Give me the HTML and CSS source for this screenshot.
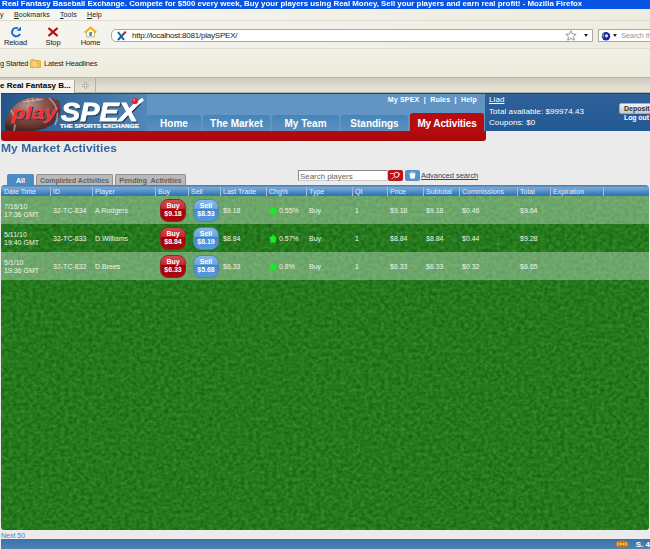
FILE: index.html
```
<!DOCTYPE html>
<html lang="en">
<head>
<meta charset="utf-8">
<title>playSPEX</title>
<link rel="stylesheet" href="styles.css">
</head>
<body>
<div class="titlebar"><span>Real Fantasy Baseball Exchange. Compete for $500 every week, Buy your players using Real Money, Sell your players and earn real profit! - Mozilla Firefox</span></div>
<div class="menubar"><span class="m1">y</span><span class="m2"><u>B</u>ookmarks</span><span class="m3"><u>T</u>ools</span><span><u>H</u>elp</span></div>
<div class="toolbar">
  <div class="tool reload"><svg width="12" height="12" viewBox="0 0 12 12"><path d="M10 8A4.2 4.2 0 1 1 8 2.3" fill="none" stroke="#1769cf" stroke-width="2"/><path d="M6.5 4.8H11V.4Z" fill="#1769cf"/></svg><span>Reload</span></div>
  <div class="tool stop"><svg width="12" height="12" viewBox="0 0 12 12"><path d="M1.5 2L10.5 10M10.5 2L1.5 10" stroke="#b3090b" stroke-width="2.2"/></svg><span>Stop</span></div>
  <div class="tool home"><svg width="13" height="12" viewBox="0 0 13 12"><path d="M2.5 5.5V11H10.5V5.5L6.5 2Z" fill="#fffbe8" stroke="#bfa878" stroke-width=".8"/><path d="M.8 6.5L6.5 1.5L12.2 6.5" fill="none" stroke="#f2ac16" stroke-width="2"/><path d="M5.3 6h2.6v4H5.3z" fill="#5088bc"/></svg><span>Home</span></div>
  <div class="address">
    <svg width="11" height="10" viewBox="0 0 11 10"><path d="M2 1L8 9M8.5 2L2 9" stroke="#17629b" stroke-width="2"/><circle cx="9" cy="1.5" r="1.2" fill="#d22"/></svg>
    <span>http://localhost:8081/playSPEX/</span>
    <svg class="star" width="12" height="11" viewBox="0 0 12 11"><path d="M6 .8L7.5 4L11.2 4.3L8.5 6.7L9.3 10.2L6 8.4L2.7 10.2L3.5 6.7L.8 4.3L4.5 4Z" fill="#fff" stroke="#8a8a8a" stroke-width=".9"/></svg>
    <i class="caret"></i>
  </div>
  <div class="search"><svg width="10" height="10" viewBox="0 0 10 10"><circle cx="5" cy="5.2" r="4.2" fill="#1c29a6"/><path d="M1 5A4 4 0 0 1 3 1.5V7Z" fill="#4cae3b"/><circle cx="5.5" cy="4.8" r="1.6" fill="#dbe5ff"/></svg><i class="caret"></i><span>Search th</span></div>
</div>
<div class="bookmarks"><span class="b1">g Started</span><svg width="11" height="9" viewBox="0 0 11 9"><path d="M.5 1.5Q.5 .5 1.5 .5H4L5 1.5H9.5Q10.5 1.5 10.5 2.5V8.5H.5Z" fill="#f5bf50" stroke="#dca02a" stroke-width=".7"/><path d="M2.5 3.2Q6 3.2 6.3 7.5M2.5 5Q4.3 5.2 4.5 7.5" fill="none" stroke="#fff3c4" stroke-width=".9"/></svg><span class="b2">Latest Headlines</span></div>
<div class="tabs"><div class="tab"><span>e Real Fantasy B...</span></div><div class="newtab"><svg width="7" height="7" viewBox="0 0 7 7"><path d="M3.5 .5V6.5M.5 3.5H6.5" stroke="#999889" stroke-width="2"/><path d="M3.5 1V6M1 3.5H6" stroke="#eceadd" stroke-width=".8"/></svg></div></div>
<div class="site">
  <header class="header">
    <div class="brandnav">
      <svg class="logo" width="146" height="37" viewBox="0 0 146 37">
        <defs>
          <radialGradient id="ball" cx=".42" cy=".25" r=".72"><stop offset="0" stop-color="#b39894"/><stop offset=".4" stop-color="#8b5850"/><stop offset=".8" stop-color="#69362f"/><stop offset="1" stop-color="#452527"/></radialGradient>
          <linearGradient id="logobg" x2="1"><stop stop-color="#245588"/><stop offset="1" stop-color="#5187b9"/></linearGradient>
        </defs>
        <path d="M0 0H146V38H0Z" fill="url(#logobg)"/>
        <path d="M4 32C6 13 21 2 39 3Q53 3 58 7C65 25 49 37 23 38H10Q3 38 4 32Z" fill="url(#ball)"/>
        <path d="M10 16Q16 25 13 37M48 4Q61 15 54 31" fill="none" stroke="#dbd2d0" stroke-width="1.6" opacity=".6"/>
        <path d="M22 8L42 5M26 5L28 9M31 4L33 8M36 4L38 7" stroke="#d6c8c5" stroke-width="1" opacity=".8"/>
        <g class="wordmark">
          <text x="11" y="25" font-size="18" fill="#f72c32" stroke="#ff686b" stroke-width=".3" textLength="45" lengthAdjust="spacingAndGlyphs">play</text>
          <text x="60" y="26.500" font-size="26" fill="#fff" stroke="#fff" stroke-width=".8" textLength="77" lengthAdjust="spacingAndGlyphs">SPEX</text>
        </g>
        <path d="M130 15L142 5" stroke="#fff" stroke-width="3"/>
        <circle cx="134" cy="7" r="3.1" fill="#eb2029"/><circle cx="133" cy="6" r="1" fill="#ff8585"/>
        <text class="tagline" x="59" y="34" font-size="5.6" fill="#fff" stroke="#fff" stroke-width=".2" textLength="79" lengthAdjust="spacingAndGlyphs">THE SPORTS EXCHANGE</text>
      </svg>
      <div class="navside">
        <div class="toplinks">My SPEX&nbsp; |&nbsp; Rules&nbsp; |&nbsp; Help</div>
        <nav><a class="n1">Home</a><a class="n2">The Market</a><a class="n3">My Team</a><a class="n4">Standings</a><a class="n5">My Activities</a></nav>
      </div>
    </div>
    <div class="account">
      <div class="who"><u>Liad</u><span>Total available: $99974.43</span><span>Coupons: $0</span></div>
      <div class="actions"><button>Deposit</button><span>Log out</span></div>
    </div>
  </header>
  <div class="redline"></div>
  <h1><span>My Market Activities</span></h1>
  <div class="controls">
    <div class="filters"><span class="f1">All</span><span class="f2">Completed Activities</span><span class="f3">Pending&nbsp; Activities</span></div>
    <div class="find"><div class="field">Search players</div>
      <svg class="go" width="15" height="11" viewBox="0 0 15 11"><rect width="15" height="11" rx="2" fill="#b71319"/><circle cx="8.5" cy="4.8" r="2.5" fill="none" stroke="#fff" stroke-width="1"/><path d="M7 6.5L3.5 9M2 3.5H6M10 7L12 3" stroke="#edb1b3" stroke-width="1"/></svg>
      <svg class="trash" width="15" height="11" viewBox="0 0 15 11"><rect width="15" height="11" rx="2" fill="#5592c7"/><path d="M5 4H10L9.4 8.2H5.6ZM4.3 3.3H10.7M6.3 2.2H8.7" fill="#fff" stroke="#fff" stroke-width=".7"/></svg>
      <u>Advanced search</u></div>
  </div>
  <main class="board">
    <svg class="grass" width="648" height="334">
      <defs><filter id="turf" x="0" y="0" width="100%" height="100%" color-interpolation-filters="sRGB"><feTurbulence type="fractalNoise" baseFrequency=".25 .28" numOctaves="3" seed="8"/><feColorMatrix values=".18 0 0 0 .055  .24 0 0 0 .355  .14 0 0 0 .045  0 0 0 0 1"/></filter></defs>
      <rect width="648" height="334" filter="url(#turf)"/>
    </svg>
    <div class="row head"><span>Date Time</span><span>ID</span><span>Player</span><span>Buy</span><span>Sell</span><span>Last Trade</span><span>Chg%</span><span>Type</span><span>Qt</span><span>Price</span><span>Subtotal</span><span>Commissions</span><span>Total</span><span>Expiration</span><span></span></div>
    <div class="row light"><span>7/16/10<br>17:36 GMT</span><span>32-TC-834</span><span>A.Rodgers</span><b class="buy">Buy<br>$9.18</b><b class="sell">Sell<br>$8.53</b><span>$9.18</span><span class="chg"><i></i>0.55%</span><span>Buy</span><span>1</span><span>$9.18</span><span>$9.18</span><span>$0.46</span><span>$9.64</span></div>
    <div class="row"><span>5/11/10<br>19:40 GMT</span><span>32-TC-833</span><span>D.Williams</span><b class="buy">Buy<br>$8.84</b><b class="sell">Sell<br>$8.19</b><span>$8.84</span><span class="chg"><i></i>0.57%</span><span>Buy</span><span>1</span><span>$8.84</span><span>$8.84</span><span>$0.44</span><span>$9.28</span></div>
    <div class="row light"><span>5/1/10<br>19:36 GMT</span><span>32-TC-832</span><span>D.Brees</span><b class="buy">Buy<br>$6.33</b><b class="sell">Sell<br>$5.68</b><span>$6.33</span><span class="chg"><i></i>0.8%</span><span>Buy</span><span>1</span><span>$6.33</span><span>$6.33</span><span>$0.32</span><span>$6.65</span></div>
  </main>
  <div class="next">Next 50</div>
  <footer><svg width="14" height="8" viewBox="0 0 14 8"><ellipse cx="7" cy="4" rx="6.8" ry="3.6" fill="#c77a12"/><path d="M4 4H10M2.8 2V6M11.2 2V6M5.5 3V5M8.5 3V5" stroke="#f4d9a0" stroke-width=".8"/></svg><b>S. 4</b></footer>
</div>
</body>
</html>
```
FILE: styles.css
```
* { box-sizing: border-box; }
body { margin: 0; width: 650px; height: 549px; overflow: hidden; background: #ebebec; font: 7px "Liberation Sans", Arial, sans-serif; white-space: nowrap; }
svg { display: block; flex: none; }

/* Browser window */
.titlebar { height: 9px; overflow: hidden; background: #0754e5; color: #fff; font-size: 8px; font-weight: bold; line-height: 8px; padding-left: 2px; }
.titlebar span { display: inline-block; transform: scaleX(.986); transform-origin: left; }
.menubar { height: 11px; display: flex; background: linear-gradient(90deg, #f6f5f0, #eeecdf); font-size: 7px; line-height: 12px; letter-spacing: .1px; color: #222; }
.m1 { width: 14px; }
.m2 { width: 46px; }
.m3 { width: 27px; }
.toolbar { height: 29px; display: flex; border-top: 1px solid #dddccf; border-bottom: 1px solid #deddd0; background: linear-gradient(90deg, #f5f4ef, #efeddf); color: #222; }
.tool { display: flex; flex: none; flex-direction: column; align-items: center; padding-top: 5px; font-size: 7.5px; line-height: 8px; gap: 1px; letter-spacing: -.15px; }
.reload { width: 31px; }
.stop { width: 44px; }
.home { width: 31px; }
.address { width: 482px; height: 13px; margin: 8px 0 0 5px; display: flex; flex: none; align-items: center; border: 1px solid #aaa99f; border-radius: 5px 0 0 5px; background: #fff; padding-left: 4px; gap: 5px; font-size: 8px; letter-spacing: -.22px; }
.star { margin-left: auto; }
.caret { border: 2px solid transparent; border-top: 3px solid #222; border-bottom: 0; margin: 0 4px 0 2px; flex: none; }
.search { width: 60px; height: 13px; margin: 8px 0 0 5px; display: flex; align-items: center; border: 1px solid #aaa99f; background: #fff; padding-left: 2px; overflow: hidden; font-size: 7.5px; letter-spacing: -.15px; color: #999; flex: none; }
.bookmarks { height: 28px; display: flex; align-items: center; background: linear-gradient(180deg, #f1f0e7, #edebdc); color: #222; font-size: 7.5px; letter-spacing: -.25px; }
.b1 { width: 30px; }
.b2 { margin-left: 3px; letter-spacing: -.15px; }
.tabs { height: 16px; display: flex; border-top: 1px solid #b8b6a6; border-bottom: 1px solid #b9b7aa; background: linear-gradient(#cccabc, #e3e1d4 70%); }
.tab { width: 75px; height: 13px; margin-top: 2px; background: #f4f3ed; border-right: 1px solid #aeac9c; font-size: 8px; font-weight: bold; line-height: 11px; }
.newtab { width: 21px; padding: 4px 7px; border-right: 1px solid #b3b1a5; }

/* Site header */
.site { margin-left: 1px; height: 456px; display: flex; flex-direction: column; }
.header { height: 38px; padding-top: 1px; background: #0f4777; display: flex; flex: none; }
.brandnav { width: 484px; display: flex; background: #6295c3; }
.wordmark { font: italic bold 18px "Liberation Sans", sans-serif; filter: drop-shadow(1px 1px 0 #223650); }
.tagline { font-family: "Liberation Sans", sans-serif; font-weight: bold; }
.navside { flex: 1; }
.toplinks { height: 21px; text-align: right; color: #fff; font-weight: bold; font-size: 7px; line-height: 11px; padding-right: 8px; letter-spacing: .2px; }
nav { display: flex; gap: 2px; align-items: flex-end; }
nav a { height: 16px; background: linear-gradient(#4585ba, #5b90bf); border-radius: 3px 3px 0 0; color: #fff; font-weight: bold; font-size: 10px; line-height: 18px; text-align: center; }
.n1 { width: 54px; } .n2 { width: 67px; } .n3 { width: 67px; } .n4 { width: 67px; }
nav .n5 { width: 74px; height: 18px; line-height: 22px; background: #b60c0f; margin-top: -2px; letter-spacing: -.12px; }
.account { flex: 1; display: flex; justify-content: space-between; background: linear-gradient(#2f6099, #245a94); color: #fff; padding-left: 4px; overflow: hidden; }
.who { display: flex; flex-direction: column; font-size: 8px; line-height: 11px; letter-spacing: .08px; }
.who u { line-height: 12px; }
.actions { width: 31px; padding-top: 9px; font-size: 7px; font-weight: bold; flex: none; }
.actions button { display: block; width: 44px; height: 11px; padding: 0 0 0 4px; border: 1px solid #aaa; border-radius: 2px; background: linear-gradient(#f3f3f3, #c8c8c8); color: #333; font: bold 7px/9px "Liberation Sans"; text-align: left; }
.actions span { display: block; margin: 0 0 0 5px; letter-spacing: -.1px; }
.redline { width: 485px; height: 10px; background: linear-gradient(#b70b0e, #a50709); border-radius: 0 0 3px 3px; flex: none; }
h1 { height: 33px; margin: 0; color: #32669c; font-size: 11px; line-height: 14px; flex: none; }
h1 span { display: inline-block; transform-origin: left; transform: scaleX(1.1); }
.controls { height: 11px; display: flex; flex: none; }
.filters { width: 297px; display: flex; gap: 2px; padding-left: 6px; font-weight: bold; }
.filters span { height: 11px; background: #b9b9b9; border: 1px solid #909090; border-bottom: 0; border-radius: 2px 2px 0 0; text-align: center; color: #626262; line-height: 11px; }
.filters .f1 { width: 27px; background: #4b8cc4; border-color: #4b8cc4; color: #fff; }
.f2 { width: 77px; } .f3 { width: 71px; }
.find { display: flex; align-items: center; margin-top: -4px; height: 11px; color: #254675; font-size: 7.5px; letter-spacing: -.05px; }
.field { width: 90px; height: 11px; border: 1px solid #888; border-right-color: #ccc; border-bottom-color: #ccc; background: #fff; color: #666; padding-left: 1px; font-size: 8px; line-height: 11px; }
.trash { margin: 0 1px 0 2px; }

/* Activity table */
.board { position: relative; isolation: isolate; width: 648px; height: 345px; border-radius: 3px; overflow: hidden; flex: none; }
.grass { position: absolute; z-index: -1; left: 0; top: 11px; }
.row { height: 28px; padding-top: 1px; display: grid; grid-template-columns: 50px 42px 63px 33px 32px 46px 40px 46px 35px 36px 36px 58px 33px 53px 45px; align-items: center; color: #edf5e8; line-height: 8px; }
.row > span { padding-left: 2px; }
.row > span:first-child { padding-left: 3px; }
.light { background: #c6dec973; }
.head { height: 11px; border-radius: 3px 3px 0 0; background: linear-gradient(#3f79ad, #77a9d7 25%, #3475b4 90%); color: #e3eefa; }
.head > span { height: 9px; line-height: 10px; border-right: 1px solid #a1bfdd; }
.head > span:last-child { border: 0; }
.row b { width: 26px; height: 23px; margin-left: 4px; padding-top: 2px; border-radius: 8px; color: #fff; text-align: center; line-height: 8px; }
.row .buy { background: linear-gradient(#d34b51, #c52b31 40%, #a00004 45%, #ab090d); border: 1px solid #9e2422; }
.row .sell { background: linear-gradient(#8ab9e5, #69a5dc 40%, #4388ca 45%, #599cde); border: 1px solid #4c85af; }
.chg { display: flex; align-items: center; gap: 2px; }
.chg i { width: 8px; height: 8px; background: #14ef22; clip-path: polygon(50% 0, 100% 50%, 83% 58%, 83% 100%, 17% 100%, 17% 58%, 0 50%); }
.next { height: 9px; color: #4983b9; line-height: 11px; flex: none; }
footer { flex: 1; display: flex; align-items: center; justify-content: flex-end; gap: 7px; background: linear-gradient(#3873a8, #4d82b2); color: #fff; font-size: 8px; }
```
